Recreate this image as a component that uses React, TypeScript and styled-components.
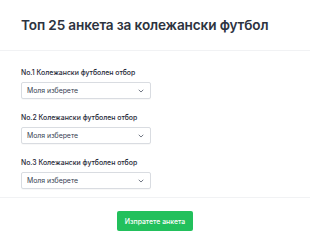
import React from "react";
import styled, { createGlobalStyle } from "styled-components";

const GlobalStyle = createGlobalStyle`
  html, body {
    margin: 0;
    padding: 0;
    background: #ffffff;
  }
  body {
    font-family: Inter, "Noto Sans", "Liberation Sans", sans-serif;
    -webkit-font-smoothing: antialiased;
  }
`;

const teams = [1, 2, 3];

export default function App() {
  return (
    <>
      <GlobalStyle />
      <Card>
        <Header>
          <Title>Топ 25 анкета за колежански футбол</Title>
        </Header>
        <Body>
          {teams.map((n) => (
            <Field key={n}>
              <Label>No.{n} Колежански футболен отбор</Label>
              <SelectBox>
                <span>Моля изберете</span>
                <Chevron viewBox="0 0 10 10" aria-hidden>
                  <path
                    d="M2.5 3.8 L5 6.3 L7.5 3.8"
                    fill="none"
                    stroke="#6b7280"
                    strokeWidth="1.2"
                    strokeLinecap="round"
                    strokeLinejoin="round"
                  />
                </Chevron>
              </SelectBox>
            </Field>
          ))}
        </Body>
        <Footer>
          <SubmitButton type="button">Изпратете анкета</SubmitButton>
        </Footer>
      </Card>
    </>
  );
}

const Card = styled.div`
  width: 310px;
  display: flex;
  flex-direction: column;
`;

const Header = styled.div`
  padding: 16px 21px;
  border-bottom: 1px solid #f1f2f4;
`;

const Title = styled.h1`
  margin: 0;
  font-size: 13.6px;
  line-height: 18px;
  font-weight: 600;
  color: #2d3340;
  letter-spacing: -0.01em;
`;

const Body = styled.div`
  display: flex;
  flex-direction: column;
  gap: 14px;
  padding: 17px 21px 8px;
  border-bottom: 1px solid #f1f2f4;
`;

const Field = styled.div`
  display: flex;
  flex-direction: column;
  gap: 4px;
`;

const Label = styled.label`
  font-size: 6.9px;
  line-height: 10px;
  font-weight: 500;
  color: #1f2937;
`;

const SelectBox = styled.div`
  box-sizing: border-box;
  width: 130px;
  height: 17px;
  padding: 0 5px 0 5px;
  display: flex;
  align-items: center;
  justify-content: space-between;
  border: 1px solid #d9dce1;
  border-radius: 2px;
  background: #fff;
  font-size: 6.9px;
  color: #374151;
  box-shadow: 0 1px 1px rgba(0, 0, 0, 0.03);
`;

const Chevron = styled.svg`
  width: 8px;
  height: 8px;
`;

const Footer = styled.div`
  display: flex;
  justify-content: center;
  padding: 13px 0 17px;
`;

const SubmitButton = styled.button`
  width: 76px;
  height: 20px;
  padding: 0;
  border: none;
  border-radius: 2px;
  background: #22c05c;
  color: #ffffff;
  font-family: inherit;
  font-size: 6.9px;
  font-weight: 500;
  white-space: nowrap;
  cursor: pointer;
`;
